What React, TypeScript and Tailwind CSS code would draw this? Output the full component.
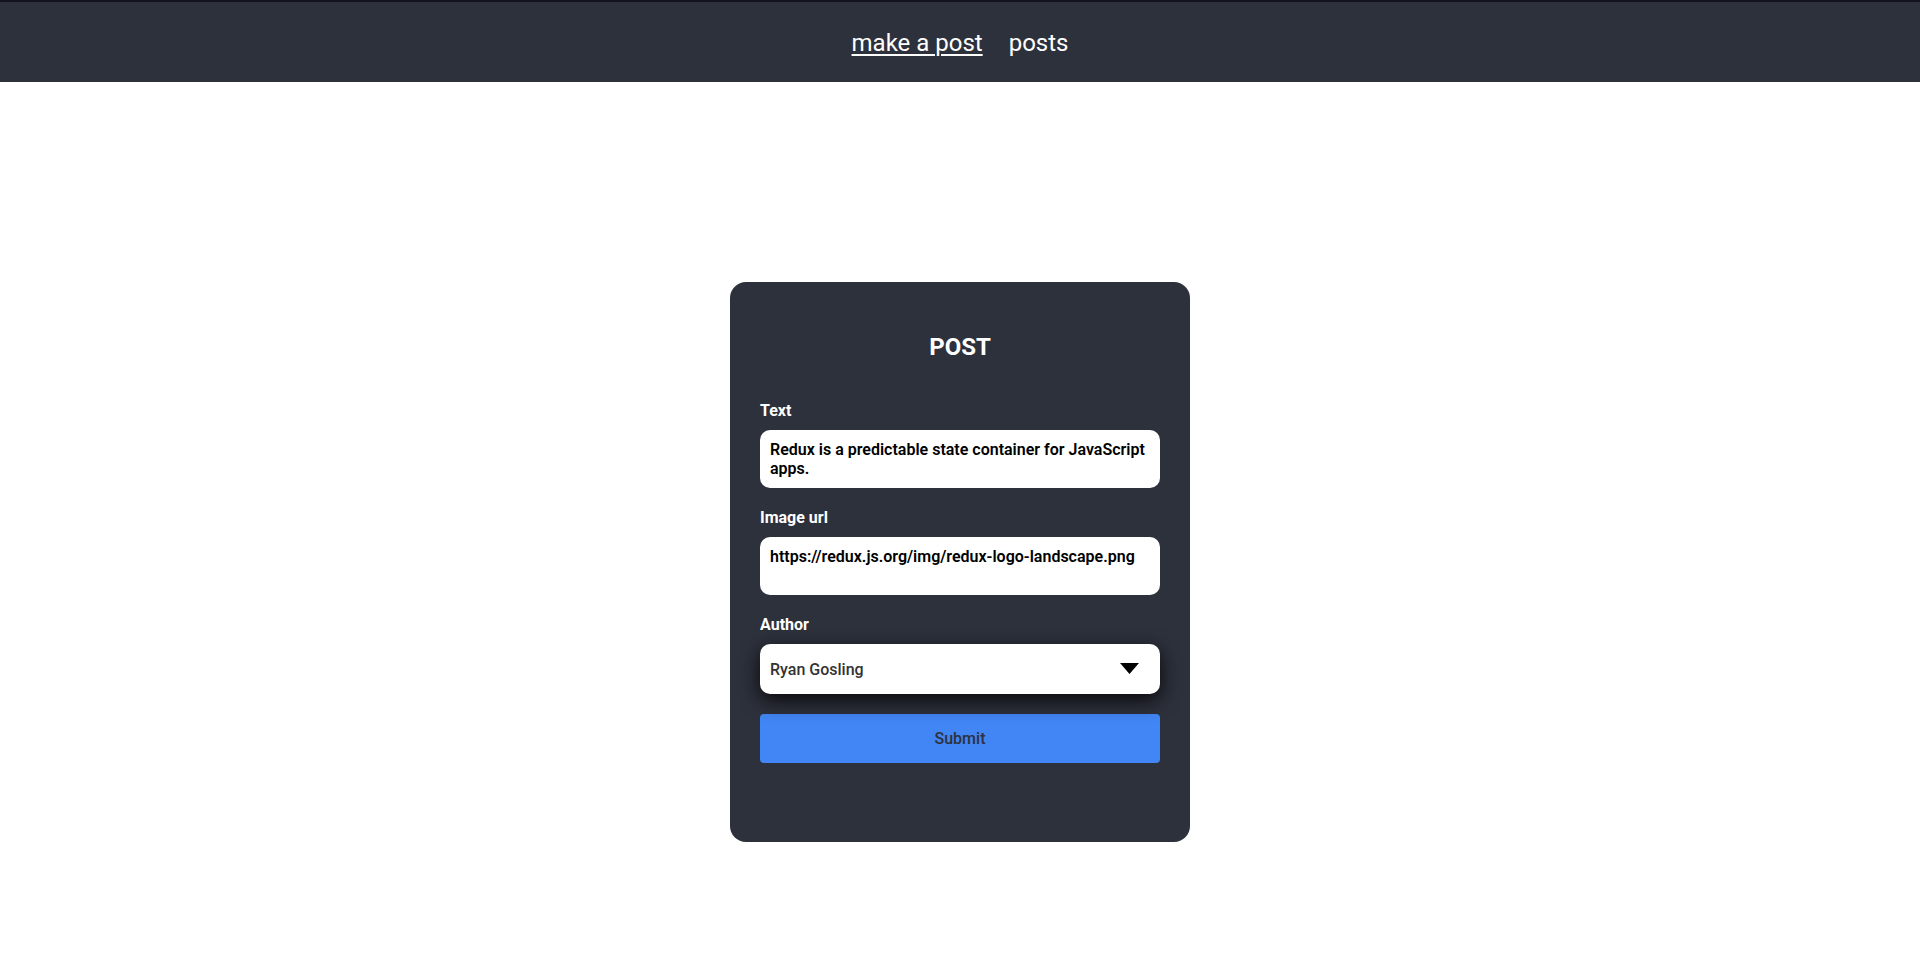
import React, { useState } from 'react'

const authors = ['Ryan Gosling', 'Keanu Reeves', 'Margot Robbie']

export default function App() {
  const [text, setText] = useState('Redux is a predictable state container for JavaScript apps.')
  const [image, setImage] = useState('https://redux.js.org/img/redux-logo-landscape.png')
  const [author, setAuthor] = useState(authors[0])

  return (
    <div className="min-h-screen bg-white font-['Roboto',sans-serif] leading-[normal]">
      {/* Nav */}
      <nav className="h-[82px] border-t-2 border-[#13131f] bg-[#2d313c] flex items-center justify-center gap-[26px] pt-[2px] text-[24px] leading-[normal] text-white">
        <a href="#" className="underline decoration-2 underline-offset-[3px]">
          make a post
        </a>
        <a href="#">posts</a>
      </nav>

      {/* Form card */}
      <div className="flex justify-center pt-[200px]">
        <form
          className="w-[460px] rounded-[16px] bg-[#2d313c] px-[30px] pt-[51px] pb-[79px]"
          onSubmit={(e) => e.preventDefault()}
        >
          <h1 className="text-center text-[24px] leading-[normal] font-bold text-white mb-[40px]">POST</h1>

          <div className="flex flex-col gap-[20px]">
            <div>
              <label className="block text-[16px] leading-[normal] font-bold text-white mb-[10px]">Text</label>
              <textarea
                className="block w-full h-[58px] resize-none rounded-[10px] bg-white p-[10px] text-[16px] font-semibold leading-[19px] text-black outline-none"
                value={text}
                onChange={(e) => setText(e.target.value)}
              />
            </div>

            <div>
              <label className="block text-[16px] leading-[normal] font-bold text-white mb-[10px]">Image url</label>
              <textarea
                className="block w-full h-[58px] resize-none rounded-[10px] bg-white p-[10px] text-[16px] font-semibold leading-[19px] text-black outline-none"
                value={image}
                onChange={(e) => setImage(e.target.value)}
              />
            </div>

            <div>
              <label className="block text-[16px] leading-[normal] font-bold text-white mb-[10px]">Author</label>
              <div className="relative">
                <select
                  className="block w-full h-[50px] appearance-none rounded-[10px] bg-white px-[10px] text-[16px] font-medium text-[#333333] outline-none shadow-[0_6px_20px_rgba(0,0,0,0.85)]"
                  value={author}
                  onChange={(e) => setAuthor(e.target.value)}
                >
                  {authors.map((a) => (
                    <option key={a} value={a}>
                      {a}
                    </option>
                  ))}
                </select>
                <svg
                  className="pointer-events-none absolute right-[21px] top-[19px]"
                  width="19"
                  height="11"
                  viewBox="0 0 19 11"
                >
                  <path d="M0 0 H19 L9.5 11 Z" fill="#000" />
                </svg>
              </div>
            </div>

            <button
              type="submit"
              className="h-[49px] w-full rounded-[4px] bg-[#4285f4] text-[16px] font-medium text-[#2d313c]"
            >
              Submit
            </button>
          </div>
        </form>
      </div>
    </div>
  )
}
